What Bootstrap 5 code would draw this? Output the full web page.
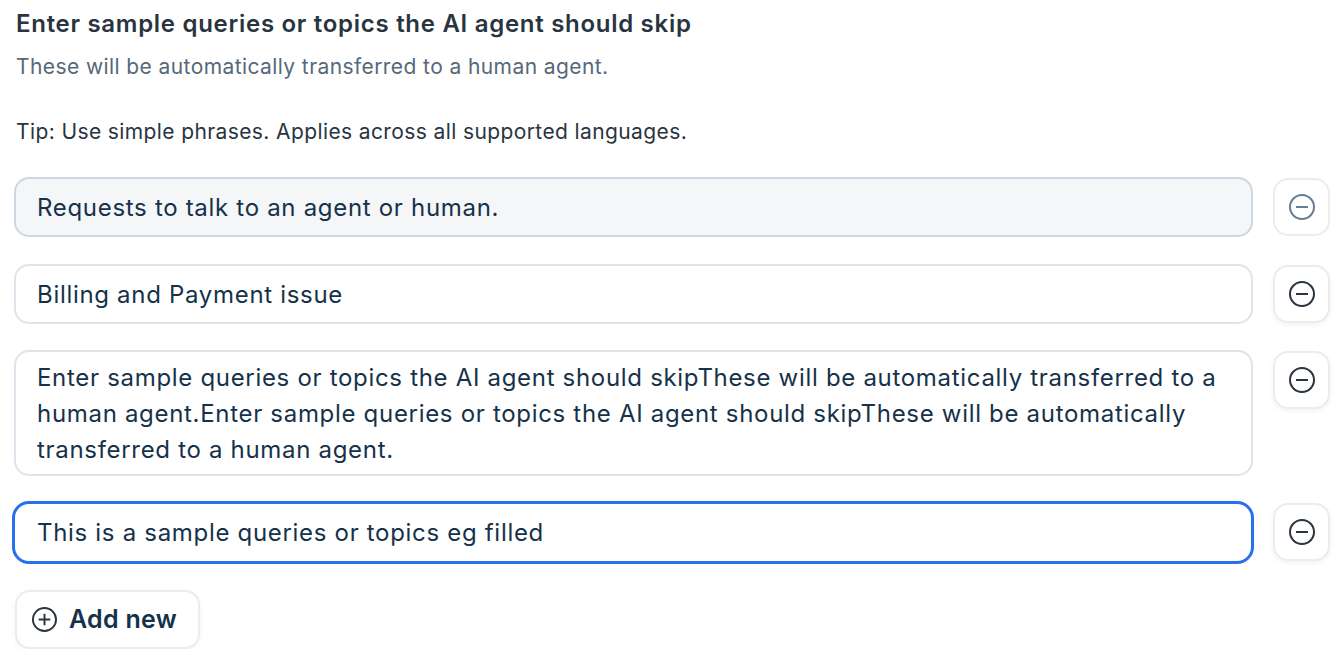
<!DOCTYPE html>
<html lang="en">
<head>
  <meta charset="UTF-8">
  <meta name="viewport" content="width=device-width, initial-scale=1.0">
  <title>Skip topics</title>
  <link href="https://cdn.jsdelivr.net/npm/bootstrap@5.3.3/dist/css/bootstrap.min.css" rel="stylesheet">
  <style>
    body {
      font-family: Inter, "Liberation Sans", sans-serif;
      background: #fff;
      overflow: hidden;
    }
    .page-wrap {
      padding: 6px 12px 0 14px;
    }
    .skip-title {
      font-size: 24px;
      font-weight: 600;
      line-height: 36px;
      letter-spacing: .71px;
      color: #29343f;
      margin: 0 0 10px 2px;
    }
    .skip-hint {
      font-size: 21px;
      line-height: 30px;
      letter-spacing: .41px;
      color: #56687a;
      margin: 0 0 35px 2px;
    }
    .skip-tip {
      font-size: 21px;
      line-height: 30px;
      letter-spacing: .39px;
      color: #29343f;
      margin: 0 0 30px 2px;
    }
    .query-row {
      margin-bottom: 27px;
    }
    .query-row.gap-md {
      margin-bottom: 26px;
    }
    .query-row.gap-sm {
      margin-bottom: 25px;
    }
    .query-box.form-control {
      font-size: 24px;
      line-height: 36px;
      letter-spacing: .69px;
      color: #16324a;
      padding: 11px 21px 9px;
      border: 2px solid #dde4eb;
      border-radius: 15px;
      width: 1239px;
      flex: none;
    }
    .query-box.is-disabled {
      background: #f4f6f8;
      border-color: #cdd7e1;
    }
    .query-box.is-multiline {
      padding-top: 8px;
      padding-bottom: 6px;
    }
    .query-box.is-focused {
      border: 3px solid #2870f0;
      padding: 11px 22px 10px;
      border-radius: 17px;
      margin-left: -2px;
      width: 1242px;
    }
    .round-btn.btn {
      width: 57px;
      height: 58px;
      padding: 0;
      margin-left: 20px;
      margin-top: 1px;
      background: #fff;
      border: 2px solid #e8edf2;
      border-radius: 15px;
      box-shadow: 0 2px 5px rgba(30, 50, 80, .06);
      display: flex;
      align-items: center;
      justify-content: center;
      flex: none;
      color: #29343f;
    }
    .query-box.is-focused + .round-btn.btn {
      margin-top: 2px;
      margin-left: 19px;
    }
    .round-btn.is-muted {
      color: #667d94;
      box-shadow: none;
    }
    .add-btn.btn {
      height: 59px;
      padding: 0 21px 0 15px;
      background: #fff;
      border: 2px solid #e8edf2;
      border-radius: 15px;
      box-shadow: 0 2px 5px rgba(30, 50, 80, .06);
      font-size: 25px;
      font-weight: 600;
      letter-spacing: .3px;
      color: #16324a;
      margin-left: 1px;
    }
    .add-btn.btn svg {
      color: #29343f;
      margin-right: 4px;
    }
  </style>
</head>
<body>
  <div class="page-wrap">
    <h1 class="skip-title">Enter sample queries or topics the AI agent should skip</h1>
    <p class="skip-hint">These will be automatically transferred to a human agent.</p>
    <p class="skip-tip">Tip: Use simple phrases. Applies across all supported languages.</p>

    <div class="d-flex align-items-start query-row">
      <div class="form-control query-box is-disabled">Requests to talk to an agent or human.</div>
      <button type="button" class="btn round-btn is-muted" aria-label="Remove">
        <svg width="26" height="26" viewBox="0 0 26 26" fill="none" stroke="currentColor" stroke-width="2"><circle cx="13" cy="13" r="12"/><path d="M7 13h12"/></svg>
      </button>
    </div>

    <div class="d-flex align-items-start query-row gap-md">
      <div class="form-control query-box">Billing and Payment issue</div>
      <button type="button" class="btn round-btn" aria-label="Remove">
        <svg width="26" height="26" viewBox="0 0 26 26" fill="none" stroke="currentColor" stroke-width="2"><circle cx="13" cy="13" r="12"/><path d="M7 13h12"/></svg>
      </button>
    </div>

    <div class="d-flex align-items-start query-row gap-sm">
      <div class="form-control query-box is-multiline">Enter sample queries or topics the AI agent should skipThese will be automatically transferred to a human agent.Enter sample queries or topics the AI agent should skipThese will be automatically transferred to a human agent.</div>
      <button type="button" class="btn round-btn" aria-label="Remove">
        <svg width="26" height="26" viewBox="0 0 26 26" fill="none" stroke="currentColor" stroke-width="2"><circle cx="13" cy="13" r="12"/><path d="M7 13h12"/></svg>
      </button>
    </div>

    <div class="d-flex align-items-start query-row gap-md">
      <div class="form-control query-box is-focused">This is a sample queries or topics eg filled</div>
      <button type="button" class="btn round-btn" aria-label="Remove">
        <svg width="26" height="26" viewBox="0 0 26 26" fill="none" stroke="currentColor" stroke-width="2"><circle cx="13" cy="13" r="12"/><path d="M7 13h12"/></svg>
      </button>
    </div>

    <button type="button" class="btn add-btn d-inline-flex align-items-center gap-2">
      <svg width="25" height="25" viewBox="0 0 26 26" fill="none" stroke="currentColor" stroke-width="2"><circle cx="13" cy="13" r="12"/><path d="M7 13h12M13 7v12"/></svg>
      Add new
    </button>
  </div>
  <script src="https://cdn.jsdelivr.net/npm/bootstrap@5.3.3/dist/js/bootstrap.bundle.min.js"></script>
</body>
</html>
